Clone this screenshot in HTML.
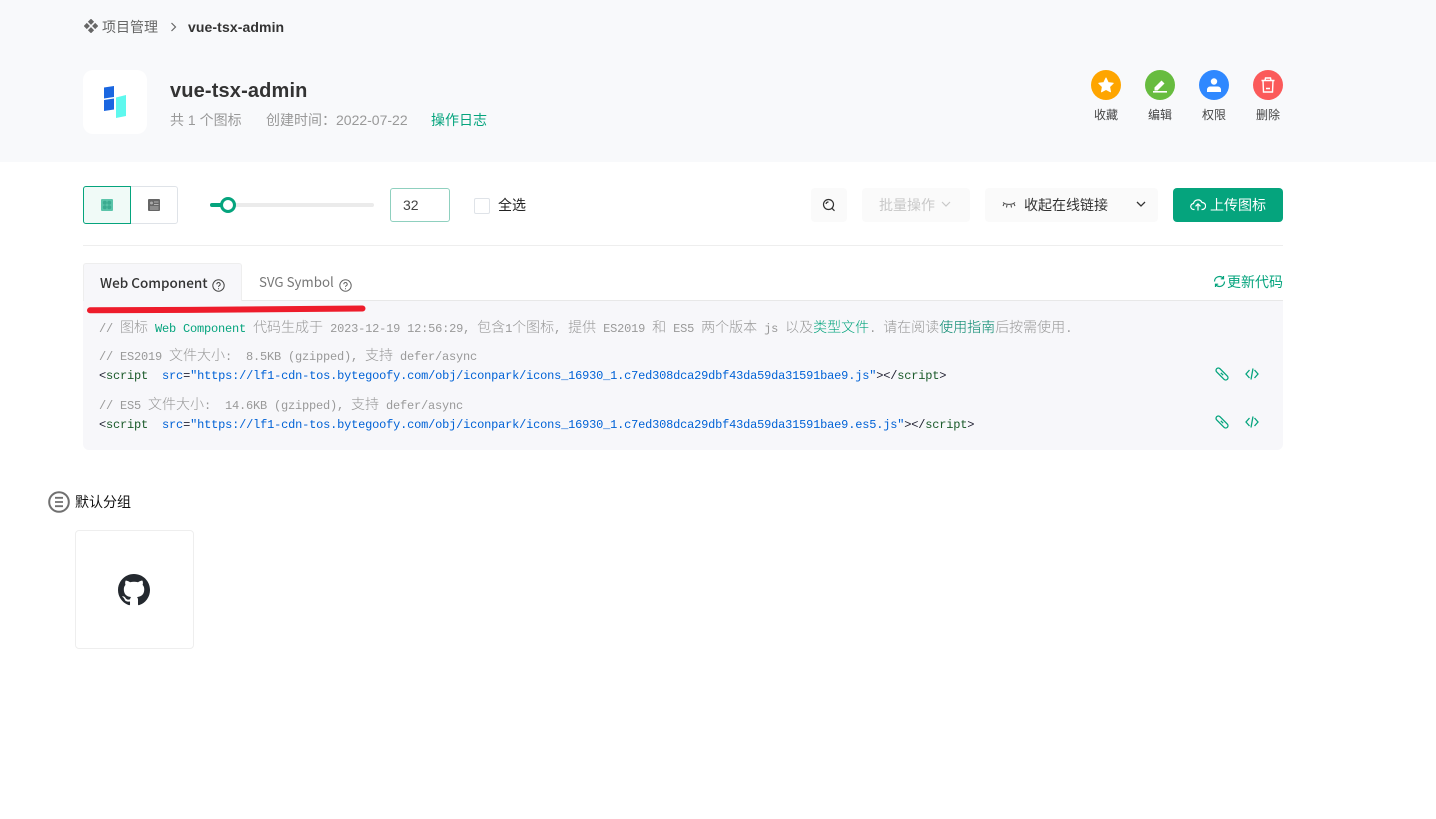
<!DOCTYPE html>
<html><head><meta charset="utf-8"><style>
*{box-sizing:border-box}
html,body{margin:0;padding:0;width:1436px;height:819px;overflow:hidden;background:#fff}
body{position:relative;font-family:"Liberation Sans","Noto Sans CJK SC",sans-serif;color:#333}
.a{position:absolute;white-space:nowrap}
svg{position:absolute;display:block}
.code{position:absolute;left:99px;white-space:pre;font-family:"Liberation Mono","Noto Sans CJK SC",monospace;font-size:12px;letter-spacing:-.2px;line-height:20px;height:20px;color:#999}
.code i{font-style:normal;font-family:"Noto Sans CJK SC",sans-serif;font-size:14px;font-weight:300;letter-spacing:0}
.g{color:#05a47d}.dg{color:#00856a}.b{color:#0062d6}.t{color:#1a5a2a}.k{color:#223}
.lab{font-size:12px;line-height:16px;color:#444;width:54px;text-align:center;top:107px}
.circ{position:absolute;width:30px;height:30px;border-radius:50%;top:70px}
.btn{position:absolute;top:188px;height:34px;border-radius:4px;background:#fafafa}
</style></head><body>
<div class="a" style="left:0;top:0;width:1436px;height:162px;background:#f8f9fb"></div>

<svg style="left:84px;top:19px" width="14" height="14" viewBox="0 0 14 14" fill="#666"><rect x="4.800" y="0.600" width="4.400" height="4.400" transform="rotate(45 7 2.800)"/><rect x="4.800" y="9" width="4.400" height="4.400" transform="rotate(45 7 11.200)"/><rect x="0.600" y="4.800" width="4.400" height="4.400" transform="rotate(45 2.800 7)"/><rect x="9" y="4.800" width="4.400" height="4.400" transform="rotate(45 11.200 7)"/></svg>
<div class="a" style="left:102px;top:17px;font-size:14px;line-height:20px;color:#666">项目管理</div>
<svg style="left:170px;top:22px" width="8" height="10" viewBox="0 0 8 10" fill="none" stroke="#666" stroke-width="1.200"><path d="M1.500 1l4 4-4 4"/></svg>
<div class="a" style="left:188px;top:17px;font-size:14px;letter-spacing:.1px;line-height:20px;font-weight:700;color:#333">vue-tsx-admin</div>

<div class="a" style="left:83px;top:70px;width:64px;height:64px;background:#fff;border-radius:10px"></div>
<svg style="left:95px;top:75px" width="40" height="50" viewBox="0 0 40 50"><path d="M9 12.500L19 11V22L9 23.500z" fill="#1a66e0"/><path d="M9 25L19 23.500V34.500L9 36z" fill="#1a66e0"/><path d="M21 22.500L31 20V41L21 43z" fill="#5ef8ee"/></svg>

<div class="a" style="left:170px;top:77px;font-size:20px;letter-spacing:.15px;line-height:28px;font-weight:700;color:#333">vue-tsx-admin</div>
<div class="a" style="left:170px;top:110px;font-size:14px;line-height:20px;color:#999">共 1 个图标</div>
<div class="a" style="left:266px;top:110px;font-size:14px;line-height:20px;color:#999">创建时间：2022-07-22</div>
<div class="a" style="left:431px;top:110px;font-size:14px;line-height:20px;color:#05a47d">操作日志</div>

<div class="circ" style="left:1091px;background:#fea500"></div>
<svg style="left:1091px;top:70px" width="30" height="30" viewBox="0 0 30 30"><path d="M15 8l2.200 4.600 5 .7-3.600 3.500.9 5-4.500-2.400-4.500 2.400.9-5-3.600-3.500 5-.7z" fill="#fff" stroke="#fff" stroke-linejoin="round"/></svg>
<div class="circ" style="left:1145px;background:#67bc3f"></div>
<svg style="left:1145px;top:70px" width="30" height="30" viewBox="0 0 30 30" fill="#fff"><path d="M9.500 17.500l7-7 3 3-7 7h-3z"/><rect x="8" y="21" width="14" height="1.600"/></svg>
<div class="circ" style="left:1199px;background:#2f88ff"></div>
<svg style="left:1199px;top:70px" width="30" height="30" viewBox="0 0 30 30" fill="#fff"><circle cx="15" cy="11.500" r="3.200"/><path d="M8 22v-2.500c0-1.500 1.500-3 3-3h8c1.500 0 3 1.500 3 3V22z"/></svg>
<div class="circ" style="left:1253px;background:#fb5a5a"></div>
<svg style="left:1253px;top:70px" width="30" height="30" viewBox="0 0 30 30" fill="none" stroke="#fff" stroke-width="1.400"><path d="M8.500 10.500h13M12 10.500l.5-2.500h5l.5 2.500M10 10.500l.5 11.500h9l.5-11.500M13 18.500h4"/></svg>
<div class="a lab" style="left:1079px">收藏</div>
<div class="a lab" style="left:1133px">编辑</div>
<div class="a lab" style="left:1187px">权限</div>
<div class="a lab" style="left:1241px">删除</div>

<div class="a" style="left:83px;top:186px;width:95px;height:38px;border:1px solid #dfe3e8;border-radius:3px"></div>
<div class="a" style="left:83px;top:186px;width:48px;height:38px;border:1px solid #05a47d;background:#f0faf7;border-radius:3px 0 0 3px"></div>
<svg style="left:101px;top:199px" width="12" height="12" viewBox="0 0 12 12"><rect width="12" height="12" rx="1" fill="#5bc4aa"/><g fill="#3aab90"><circle cx="3.800" cy="3.800" r="2"/><circle cx="8.200" cy="3.800" r="2"/><circle cx="3.800" cy="8.200" r="2"/><circle cx="8.200" cy="8.200" r="2"/></g></svg>
<svg style="left:148px;top:199px" width="12" height="12" viewBox="0 0 12 12"><rect width="12" height="12" rx="1" fill="#666"/><circle cx="3.500" cy="4" r="1.500" fill="#aaa"/><path d="M6 3h4.500M6 5.500h4.500M2 8h8.500M2 10h8.500" stroke="#ccc" stroke-width=".8"/></svg>

<div class="a" style="left:210px;top:203px;width:164px;height:4px;background:#ebebeb;border-radius:2px"></div>
<div class="a" style="left:210px;top:203px;width:18px;height:4px;background:#05a47d;border-radius:2px"></div>
<div class="a" style="left:220px;top:197px;width:16px;height:16px;background:#fff;border:3px solid #05a47d;border-radius:50%"></div>

<div class="a" style="left:390px;top:188px;width:60px;height:34px;border:1px solid #8fd0bf;border-radius:3px;background:#fff;font-size:14px;line-height:32px;padding-left:12px;color:#444">32</div>
<div class="a" style="left:474px;top:198px;width:16px;height:16px;border:1px solid #dfe3e8;border-radius:2px;background:#fff"></div>
<div class="a" style="left:498px;top:195px;font-size:14px;line-height:20px;color:#222">全选</div>

<div class="btn" style="left:811px;width:36px"></div>
<svg style="left:822px;top:198px" width="14" height="14" viewBox="0 0 14 14" fill="none" stroke="#333" stroke-width="1.200"><circle cx="6.500" cy="6.500" r="5"/><path d="M10 10.300l2.500 2.500M4 6a2.500 2.500 0 0 1 2.500-2"/></svg>
<div class="btn" style="left:862px;width:108px"></div>
<div class="a" style="left:879px;top:195px;font-size:14px;line-height:20px;color:#c8c8c8">批量操作</div>
<svg style="left:941px;top:201px" width="10" height="7" viewBox="0 0 10 7" fill="none" stroke="#c8c8c8" stroke-width="1.200"><path d="M1 1l4 4 4-4"/></svg>
<div class="btn" style="left:985px;width:173px"></div>
<svg style="left:1002px;top:200px" width="14" height="9" viewBox="0 0 14 9" fill="none" stroke="#444" stroke-width="1"><path d="M1 2.500c3 2.500 9 2.500 12 0M2 4l-1 2M5 5l-.5 2.500M9 5l.5 2.500M12 4l1 2"/></svg>
<div class="a" style="left:1024px;top:195px;font-size:14px;line-height:20px;color:#333">收起在线链接</div>
<svg style="left:1136px;top:201px" width="10" height="7" viewBox="0 0 10 7" fill="none" stroke="#333" stroke-width="1.300"><path d="M1 1l4 4 4-4"/></svg>
<div class="btn" style="left:1173px;width:110px;background:#05a47d"></div>
<svg style="left:1190px;top:197px" width="16" height="15" viewBox="0 0 16 15" fill="none" stroke="#fff" stroke-width="1.200"><path d="M4.500 12.500H4a3 3 0 0 1-.5-6A4.500 4.500 0 0 1 12 5.500a3.500 3.500 0 0 1 .2 7h-.7M8 13.500V7M5.500 9.300L8 6.800l2.500 2.500"/></svg>
<div class="a" style="left:1210px;top:195px;font-size:14px;line-height:20px;color:#fff">上传图标</div>

<div class="a" style="left:83px;top:245px;width:1200px;height:1px;background:#eee"></div>

<div class="a" style="left:83px;top:300px;width:1200px;height:150px;background:#f7f7fa;border-top:1px solid #e8e8e8;border-radius:0 0 6px 6px"></div>
<div class="a" style="left:83px;top:263px;width:159px;height:38px;background:#f7f7fa;border:1px solid #eee;border-bottom:0;border-radius:3px 3px 0 0"></div>
<div class="a" style="left:100px;top:272px;font-family:'Noto Sans CJK SC',sans-serif;font-size:13.500px;line-height:20px;font-weight:500;color:#333">Web Component</div>
<svg style="left:212px;top:279px" width="13" height="13" viewBox="0 0 13 13" fill="none" stroke="#444" stroke-width="1"><circle cx="6.500" cy="6.500" r="5.700"/><path d="M4.800 5.200a1.700 1.700 0 1 1 2.500 1.500c-.6.300-.8.600-.8 1.200M6.500 9.200v1"/></svg>
<div class="a" style="left:259px;top:272px;font-family:'Noto Sans CJK SC',sans-serif;font-size:13.300px;line-height:20px;color:#777">SVG Symbol</div>
<svg style="left:339px;top:279px" width="13" height="13" viewBox="0 0 13 13" fill="none" stroke="#666" stroke-width="1"><circle cx="6.500" cy="6.500" r="5.700"/><path d="M4.800 5.200a1.700 1.700 0 1 1 2.500 1.500c-.6.300-.8.600-.8 1.200M6.500 9.200v1"/></svg>
<svg style="left:1213px;top:275px" width="13" height="13" viewBox="0 0 13 13" fill="none" stroke="#05a47d" stroke-width="1.200"><path d="M11.500 6.500a5 5 0 0 1-8.800 3.200M1.500 6.500a5 5 0 0 1 8.800-3.200M10.500 1v2.800H7.800M2.500 12V9.200h2.700"/></svg>
<div class="a" style="left:1227px;top:272px;font-size:14px;line-height:20px;color:#05a47d">更新代码</div>

<svg style="left:80px;top:300px" width="300" height="16" viewBox="0 0 300 16"><path d="M10 10.300C100 10 200 9.500 282.500 8.500" stroke="#ee1c2b" stroke-width="6" stroke-linecap="round" fill="none"/></svg>

<div class="code" style="top:317px">// <i>图标</i> <span class="g">Web Component</span> <i>代码生成于</i> 2023-12-19 12:56:29, <i>包含</i>1<i>个图标</i>, <i>提供</i> ES2019 <i>和</i> ES5 <i>两个版本</i> js <i>以及</i><i class="g">类型文件</i>. <i>请在阅读</i><i class="dg">使用指南</i><i>后按需使用</i>.</div>
<div class="code" style="top:345px">// ES2019 <i>文件大小</i>:  8.5KB (gzipped), <i>支持</i> defer/async</div>
<div class="code" style="top:366px"><span class="k">&lt;</span><span class="t">script</span>  <span class="b">src</span><span class="k">=</span><span class="b">"https://lf1-cdn-tos.bytegoofy.com/obj/iconpark/icons_16930_1.c7ed308dca29dbf43da59da31591bae9.js"</span><span class="k">&gt;&lt;/</span><span class="t">script</span><span class="k">&gt;</span></div>
<div class="code" style="top:394px">// ES5 <i>文件大小</i>:  14.6KB (gzipped), <i>支持</i> defer/async</div>
<div class="code" style="top:415px"><span class="k">&lt;</span><span class="t">script</span>  <span class="b">src</span><span class="k">=</span><span class="b">"https://lf1-cdn-tos.bytegoofy.com/obj/iconpark/icons_16930_1.c7ed308dca29dbf43da59da31591bae9.es5.js"</span><span class="k">&gt;&lt;/</span><span class="t">script</span><span class="k">&gt;</span></div>

<svg style="left:1215px;top:367px" width="14" height="14" viewBox="0 0 14 14" fill="none" stroke="#05a47d" stroke-width="1.300"><rect x="-0.500" y="4.700" width="15" height="4.600" rx="2.300" transform="rotate(45 7 7)"/><path d="M5.800 5.800l2.400 2.400"/></svg>
<svg style="left:1245px;top:367px" width="14" height="14" viewBox="0 0 14 14" fill="none" stroke="#05a47d" stroke-width="1.300"><path d="M4.500 3L1 7l3.500 4M9.500 3L13 7l-3.500 4M8 1.500L6 12.500"/></svg>
<svg style="left:1215px;top:415px" width="14" height="14" viewBox="0 0 14 14" fill="none" stroke="#05a47d" stroke-width="1.300"><rect x="-0.500" y="4.700" width="15" height="4.600" rx="2.300" transform="rotate(45 7 7)"/><path d="M5.800 5.800l2.400 2.400"/></svg>
<svg style="left:1245px;top:415px" width="14" height="14" viewBox="0 0 14 14" fill="none" stroke="#05a47d" stroke-width="1.300"><path d="M4.500 3L1 7l3.500 4M9.500 3L13 7l-3.500 4M8 1.500L6 12.500"/></svg>

<svg style="left:48px;top:491px" width="22" height="22" viewBox="0 0 22 22" fill="none" stroke="#707070"><circle cx="11" cy="11" r="9.800" stroke-width="2"/><path d="M7 6.800h8M7 11h8M7 15.200h8" stroke-width="1.800"/></svg>
<div class="a" style="left:75px;top:492px;font-size:14px;line-height:20px;color:#111">默认分组</div>
<div class="a" style="left:75px;top:530px;width:119px;height:119px;border:1px solid #eee;border-radius:4px;background:#fff"></div>
<svg style="left:118px;top:574px" width="32" height="32" viewBox="0 0 16 16"><path fill="#24292f" d="M8 0C3.580 0 0 3.580 0 8c0 3.540 2.290 6.530 5.470 7.590.4.070.55-.17.55-.38 0-.19-.01-.82-.01-1.490-2.010.37-2.530-.49-2.690-.94-.09-.23-.48-.94-.82-1.130-.28-.15-.68-.52-.01-.53.63-.01 1.080.58 1.230.82.72 1.210 1.870.87 2.330.66.07-.52.28-.87.51-1.070-1.780-.2-3.640-.89-3.640-3.950 0-.87.31-1.590.82-2.150-.08-.2-.36-1.020.08-2.120 0 0 .67-.21 2.200.82.64-.18 1.320-.27 2-.27.68 0 1.360.09 2 .27 1.530-1.040 2.200-.82 2.200-.82.44 1.100.16 1.920.08 2.120.51.56.82 1.270.82 2.150 0 3.070-1.870 3.750-3.650 3.950.29.25.54.73.54 1.480 0 1.070-.01 1.930-.01 2.200 0 .21.15.46.55.38A8.013 8.013 0 0016 8c0-4.420-3.580-8-8-8z"/></svg>
</body></html>
